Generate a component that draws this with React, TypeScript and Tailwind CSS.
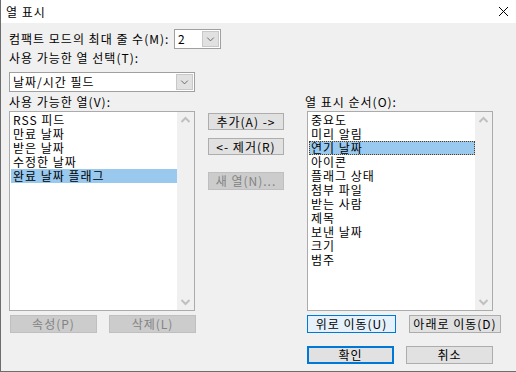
import React from "react";

const font = "font-['Noto_Sans_CJK_KR',sans-serif]";

function ComboChevron() {
  return (
    <svg width="16" height="16" viewBox="0 0 16 16">
      <path d="M4.5 6.5 L8 10 L11.5 6.5" fill="none" stroke="#606060" strokeWidth="1" />
    </svg>
  );
}

function ScrollArrow({ up }: { up?: boolean }) {
  return (
    <svg width="17" height="17" viewBox="0 0 17 17">
      {up ? (
        <path d="M4.5 10 L8.5 6 L12.5 10" fill="none" stroke="#c0c0c0" strokeWidth="2" />
      ) : (
        <path d="M4.5 7 L8.5 11 L12.5 7" fill="none" stroke="#c0c0c0" strokeWidth="2" />
      )}
    </svg>
  );
}

function ListBox({ items, selected, focus }: { items: string[]; selected: number; focus?: boolean }) {
  return (
    <div className="flex h-[200px] w-[186px] border border-[#ababab] bg-white">
      <div className="flex-1 flex flex-col pl-[1px] pt-[1px]">
        {items.map((it, i) => (
          <div
            key={i}
            className={
              i === selected
                ? focus
                  ? "h-[14px] pl-[1px] bg-[#99c9ef] border border-dotted border-[#5a3c14] leading-[12px] whitespace-nowrap"
                  : "h-[14px] pl-[2px] bg-[#99c9ef] whitespace-nowrap"
                : "h-[14px] pl-[2px] whitespace-nowrap"
            }
          >
            {it}
          </div>
        ))}
      </div>
      <div className="w-[17px] bg-[#f0f0f0] flex flex-col justify-between">
        <ScrollArrow up />
        <ScrollArrow />
      </div>
    </div>
  );
}

export default function App() {
  const leftItems = ["RSS 피드", "만료 날짜", "받은 날짜", "수정한 날짜", "완료 날짜 플래그"];
  const rightItems = [
    "중요도",
    "미리 알림",
    "연기 날짜",
    "아이콘",
    "플래그 상태",
    "첨부 파일",
    "받는 사람",
    "제목",
    "보낸 날짜",
    "크기",
    "범주",
  ];
  const btn = "h-[17px] flex items-center justify-center border whitespace-nowrap";
  const normal = "bg-[#e1e1e1] border-[#adadad]";
  const disabled = "bg-[#cccccc] border-[#bfbfbf] text-[#838383]";
  return (
    <div
      className={`w-[516px] h-[372px] bg-[#f0f0f0] border-l border-b border-[#6d6d6d] flex flex-col text-[12px] leading-[14px] tracking-[1px] text-black overflow-hidden ${font}`}
    >
      <div className="h-[23px] shrink-0 bg-white flex items-center justify-between pl-[5px] pr-[7px]">
        <span>열 표시</span>
        <svg width="11" height="11" viewBox="0 0 11 11">
          <path d="M1 1 L10 10 M10 1 L1 10" stroke="#000" strokeWidth="1" />
        </svg>
      </div>
      <div className="flex flex-col pl-[8px]">
        <div className="mt-[6px] h-[20px] flex items-center">
          <span className="w-[165px] whitespace-nowrap">컴팩트 모드의 최대 줄 수(M):</span>
          <div className="w-[47px] h-[20px] border border-[#a0a0a0] bg-white flex items-center justify-between pl-[3px] pr-[1px]">
            <span>2</span>
            <div className="w-[17px] h-[16px] bg-[#e1e1e1] border border-[#c8c8c8] flex items-center justify-center">
              <ComboChevron />
            </div>
          </div>
        </div>
        <div className="mt-[2px] h-[14px]">사용 가능한 열 선택(T):</div>
        <div className="mt-[7px] w-[186px] h-[20px] border border-[#a0a0a0] bg-white flex items-center justify-between pl-[3px] pr-[1px]">
          <span>날짜/시간 필드</span>
          <div className="w-[17px] h-[16px] bg-[#e1e1e1] border border-[#c8c8c8] flex items-center justify-center">
            <ComboChevron />
          </div>
        </div>
        <div className="mt-[3px] flex">
          <div className="w-[187px] flex flex-col">
            <div className="h-[14px]">사용 가능한 열(V):</div>
            <div className="mt-[2px]">
              <ListBox items={leftItems} selected={4} />
            </div>
            <div className="mt-[4px] flex gap-[12px] pl-[1px]">
              <div className={`${btn} ${disabled} w-[87px] h-[18px]`}>속성(P)</div>
              <div className={`${btn} ${disabled} w-[87px] h-[18px]`}>삭제(L)</div>
            </div>
          </div>
          <div className="ml-[12px] w-[76px] flex flex-col pt-[18px]">
            <div className={`${btn} ${normal}`}>추가(A) -&gt;</div>
            <div className={`${btn} ${normal} mt-[8px]`}>&lt;- 제거(R)</div>
            <div className={`${btn} ${disabled} mt-[17px] h-[18px]`}>새 열(N)...</div>
          </div>
          <div className="ml-[22px] w-[196px] flex flex-col">
            <div className="h-[14px] -ml-[1px]">열 표시 순서(O):</div>
            <div className="mt-[2px] ml-[1px]">
              <ListBox items={rightItems} selected={2} focus />
            </div>
            <div className="mt-[4px] flex pl-[1px] gap-[13px]">
              <div className={`${btn} h-[18px] w-[89px] bg-[#e5f1fb] border-[#0078d7]`}>위로 이동(U)</div>
              <div className={`${btn} h-[18px] w-[92px] ${normal}`}>아래로 이동(D)</div>
            </div>
            <div className="mt-[13px] flex pl-[1px] gap-[12px]">
              <div className="h-[18px] w-[87px] flex items-center justify-center border-2 border-[#0078d7] bg-[#e1e1e1]">확인</div>
              <div className={`${btn} h-[18px] w-[87px] ${normal}`}>취소</div>
            </div>
          </div>
        </div>
      </div>
    </div>
  );
}
